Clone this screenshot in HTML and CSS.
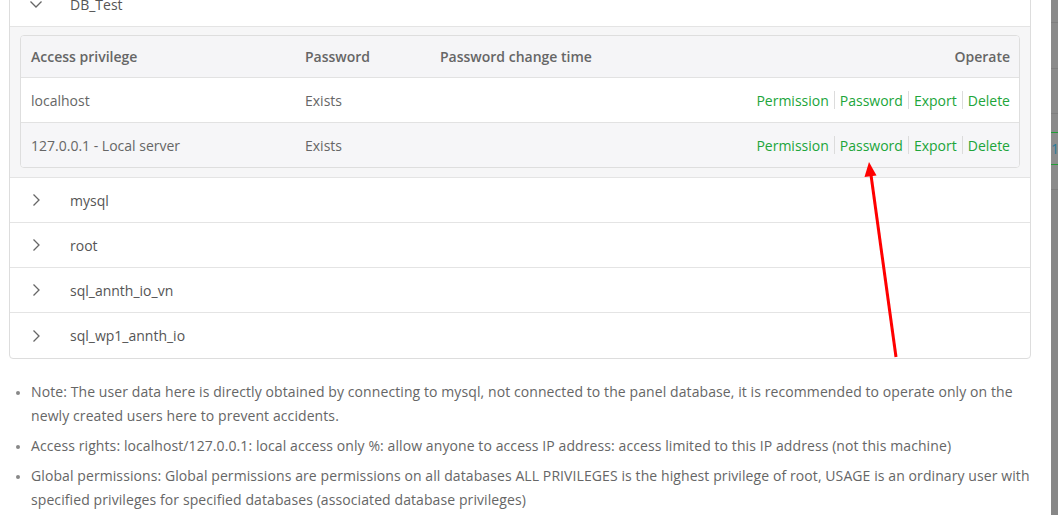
FILE: index.html
```html
<!DOCTYPE html>
<html>
<head>
<meta charset="utf-8">
<link rel="stylesheet" href="styles.css">
</head>
<body>
<div class="page">
  <main class="main">
    <div class="panel">
      <div class="user-row open">
        <span class="chev"><svg width="14" height="14" viewBox="0 0 14 14"><path d="M1.5 4.5 L7 10 L12.5 4.5" fill="none" stroke="#666" stroke-width="1.3"/></svg></span>
        <span class="uname">DB_Test</span>
      </div>
      <div class="expand">
        <div class="tbl">
          <div class="tr th">
            <div class="c1">Access privilege</div>
            <div class="c2">Password</div>
            <div class="c3">Password change time</div>
            <div class="c4">Operate</div>
          </div>
          <div class="tr">
            <div class="c1">localhost</div>
            <div class="c2">Exists</div>
            <div class="c3"></div>
            <div class="c4 ops"><a>Permission</a><i></i><a>Password</a><i></i><a>Export</a><i></i><a>Delete</a></div>
          </div>
          <div class="tr alt">
            <div class="c1">127.0.0.1 - Local server</div>
            <div class="c2">Exists</div>
            <div class="c3"></div>
            <div class="c4 ops"><a>Permission</a><i></i><a>Password</a><i></i><a>Export</a><i></i><a>Delete</a></div>
          </div>
        </div>
      </div>
      <div class="user-row">
        <span class="chev"><svg width="14" height="14" viewBox="0 0 14 14"><path d="M4.5 1.5 L10 7 L4.5 12.5" fill="none" stroke="#666" stroke-width="1.3"/></svg></span>
        <span class="uname">mysql</span>
      </div>
      <div class="user-row">
        <span class="chev"><svg width="14" height="14" viewBox="0 0 14 14"><path d="M4.5 1.5 L10 7 L4.5 12.5" fill="none" stroke="#666" stroke-width="1.3"/></svg></span>
        <span class="uname">root</span>
      </div>
      <div class="user-row">
        <span class="chev"><svg width="14" height="14" viewBox="0 0 14 14"><path d="M4.5 1.5 L10 7 L4.5 12.5" fill="none" stroke="#666" stroke-width="1.3"/></svg></span>
        <span class="uname">sql_annth_io_vn</span>
      </div>
      <div class="user-row last">
        <span class="chev"><svg width="14" height="14" viewBox="0 0 14 14"><path d="M4.5 1.5 L10 7 L4.5 12.5" fill="none" stroke="#666" stroke-width="1.3"/></svg></span>
        <span class="uname">sql_wp1_annth_io</span>
      </div>
    </div>
    <ul class="notes">
      <li>Note: The user data here is directly obtained by connecting to mysql, not connected to the panel database, it is recommended to operate only on the newly created users here to prevent accidents.</li>
      <li>Access rights: localhost/127.0.0.1: local access only %: allow anyone to access IP address: access limited to this IP address (not this machine)</li>
      <li>Global permissions: Global permissions are permissions on all databases ALL PRIVILEGES is the highest privilege of root, USAGE is an ordinary user with specified privileges for specified databases (associated database privileges)</li>
    </ul>
  </main>
  <aside class="strip">
    <div class="seg s1"></div>
    <div class="seg s2"></div>
    <div class="seg s3"></div>
    <div class="seg s4"></div>
    <div class="seg green">1</div>
    <div class="seg s5"></div>
    <div class="seg rest"></div>
  </aside>
  <svg class="arrow" width="1058" height="515" viewBox="0 0 1058 515">
    <line x1="896" y1="357" x2="871" y2="175" stroke="#f00" stroke-width="3"/>
    <polygon points="869,162 864.5,177 876.5,175.5" fill="#f00"/>
  </svg>
</div>
</body>
</html>
```

FILE: styles.css
```css
* { box-sizing: border-box; }
html, body { margin: 0; padding: 0; background: #fff; }
body {
  font-family: "Open Sans", "Lato", sans-serif;
  font-size: 14px;
  color: #666;
  width: 1058px;
  height: 515px;
  overflow: hidden;
}
.page {
  position: relative;
  display: flex;
  width: 1058px;
  height: 515px;
  overflow: hidden;
}
.main {
  width: 1051px;
  padding-left: 9px;
  padding-right: 20px;
}
.panel {
  margin-top: -19px;
  border: 1px solid #ddd;
  border-radius: 4px;
  background: #fff;
}
.user-row {
  height: 45px;
  display: flex;
  align-items: center;
  border-bottom: 1px solid #e4e4e4;
  color: #555;
}
.user-row.last { border-bottom: none; height: 45px; }
.chev {
  width: 14px;
  height: 14px;
  margin-left: 19px;
  display: flex;
}
.uname {
  margin-left: 27px;
  font-size: 14px;
}
.expand {
  background: #f6f6f7;
  padding: 8px 10px 9px 10px;
  border-bottom: 1px solid #e4e4e4;
}
.tbl {
  border: 1px solid #dedede;
  border-radius: 4px;
  overflow: hidden;
  background: #fff;
}
.tr {
  display: flex;
  align-items: center;
  height: 45px;
  border-top: 1px solid #e2e2e2;
  padding: 0 9px 0 10px;
}
.tr.th {
  height: 41px;
  border-top: none;
  background: #f5f5f7;
  font-weight: 600;
  color: #666;
}
.tr.alt { background: #f6f6f8; }
.c1 { width: 274px; }
.c2 { width: 135px; }
.c3 { flex: 1; }
.c4 { text-align: right; }
.ops {
  display: flex;
  align-items: center;
}
.ops a {
  color: #20a53a;
  text-decoration: none;
}
.ops i {
  display: block;
  width: 1px;
  height: 18px;
  background: #dcdcdc;
  margin: 0 5px;
}
.notes {
  margin: 21px 0 0 0;
  padding-left: 22px;
  color: #666;
  line-height: 24px;
  letter-spacing: 0.09px;
  list-style: disc;
}
.notes li { margin-bottom: 6px; padding-right: 0; }
.notes li::marker { color: #888; font-size: 11px; }
.strip {
  width: 7px;
  display: flex;
  flex-direction: column;
  background: #8a8a8a;
}
.seg { border-bottom: 1px solid #7e7e7e; }
.s1 { height: 23px; }
.s2 { height: 46px; }
.s3 { height: 45px; }
.s4 { height: 18px; border-bottom: none; }
.green {
  height: 33px;
  border-top: 1px solid #1f9e34;
  border-bottom: 1px solid #1f9e34;
  color: #2a7a9a;
  font-size: 14px;
  line-height: 31px;
  overflow: hidden;
  background: #8d8d8d;
}
.s5 { height: 25px; }
.rest { flex: 1; background: #878787; border: none; }
.arrow {
  position: absolute;
  left: 0;
  top: 0;
  pointer-events: none;
}
```
